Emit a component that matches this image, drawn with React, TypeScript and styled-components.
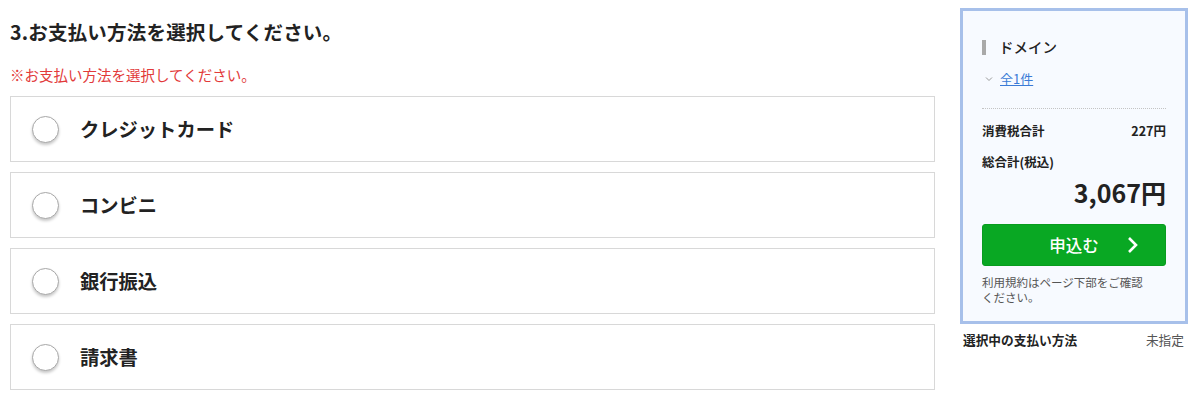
import React from "react";
import styled, { createGlobalStyle } from "styled-components";

const Global = createGlobalStyle`
  html, body { margin: 0; padding: 0; background: #fff; }
  body {
    font-family: "Noto Sans CJK JP", "Noto Sans", "Liberation Sans", sans-serif;
    color: #222;
  }
  * { box-sizing: border-box; }
`;

const Page = styled.div`
  display: flex;
  align-items: flex-start;
  width: 1200px;
  height: 407px;
  padding: 8px 12px 0 10px;
`;

const Main = styled.div`
  width: 925px;
  padding-top: 9px;
  display: flex;
  flex-direction: column;
`;

const Title = styled.h2`
  margin: 0;
  font-size: 19.5px;
  line-height: 30px;
  font-weight: 700;
  color: #222;
  letter-spacing: 0.2px;
`;

const Warning = styled.p`
  margin: 18px 0 0;
  font-size: 14.5px;
  line-height: 20px;
  color: #e23a3a;
`;

const Options = styled.div`
  margin-top: 11px;
  display: flex;
  flex-direction: column;
  gap: 10px;
`;

const Option = styled.label`
  display: flex;
  align-items: center;
  height: 66px;
  border: 1px solid #d8d8d8;
  padding-left: 21px;
  gap: 21px;
  background: #fff;
  cursor: pointer;
`;

const Radio = styled.span`
  width: 27px;
  height: 27px;
  border-radius: 50%;
  border: 1px solid #a8a8a8;
  background: #fff;
  box-shadow: 0 2px 3px rgba(0, 0, 0, 0.22);
  flex-shrink: 0;
`;

const OptionLabel = styled.span`
  font-size: 19.3px;
  font-weight: 700;
  color: #222;
  line-height: 28px;
`;

const Side = styled.aside`
  margin-left: 25px;
  width: 228px;
  display: flex;
  flex-direction: column;
`;

const Summary = styled.div`
  border: 3px solid #a7c0ea;
  background: #f7faff;
  padding: 26px 19px 16px;
  display: flex;
  flex-direction: column;
`;

const SectionHead = styled.div`
  display: flex;
  align-items: center;
  gap: 13px;
  font-size: 14.5px;
  line-height: 20px;
  font-weight: 500;
  color: #222;
  &::before {
    content: "";
    width: 4px;
    height: 15px;
    background: #a9a9a9;
  }
`;

const CountRow = styled.div`
  margin-top: 12px;
  display: flex;
  align-items: center;
  gap: 7px;
  padding-left: 3px;
  line-height: 20px;
`;

const CountLink = styled.a`
  font-size: 13px;
  color: #3a7ad6;
  text-decoration: underline;
  cursor: pointer;
`;

const Divider = styled.hr`
  margin: 19px 0 0;
  border: 0;
  border-top: 1px dotted #c4c4c4;
  height: 0;
`;

const Row = styled.div`
  margin-top: 13px;
  display: flex;
  justify-content: space-between;
  font-size: 12.5px;
  line-height: 18px;
  font-weight: 700;
  color: #222;
`;

const Total = styled.div`
  margin-top: 6px;
  text-align: right;
  font-size: 25px;
  line-height: 30px;
  font-weight: 700;
  color: #222;
`;

const Submit = styled.button`
  margin-top: 17px;
  height: 42px;
  width: 100%;
  border: 1px solid #089c1f;
  border-radius: 3px;
  background: #09a823;
  color: #fff;
  font-family: inherit;
  font-size: 16.5px;
  font-weight: 500;
  display: flex;
  align-items: center;
  justify-content: center;
  position: relative;
  cursor: pointer;
`;

const Arrow = styled.svg`
  position: absolute;
  right: 26px;
  top: 50%;
  transform: translateY(-50%);
`;

const Note = styled.p`
  margin: 9px 0 0;
  max-width: 168px;
  font-size: 11.5px;
  line-height: 15px;
  color: #555;
`;

const Selected = styled.div`
  margin-top: 7px;
  padding: 0 4px 0 3px;
  display: flex;
  justify-content: space-between;
  font-size: 12.7px;
  line-height: 18px;
`;

const SelectedLabel = styled.span`
  font-weight: 700;
  color: #222;
`;

const SelectedValue = styled.span`
  color: #555;
`;

const methods = ["クレジットカード", "コンビニ", "銀行振込", "請求書"];

export default function App() {
  return (
    <>
      <Global />
      <Page>
        <Main>
          <Title>3.お支払い方法を選択してください。</Title>
          <Warning>※お支払い方法を選択してください。</Warning>
          <Options>
            {methods.map((m) => (
              <Option key={m}>
                <Radio />
                <OptionLabel>{m}</OptionLabel>
              </Option>
            ))}
          </Options>
        </Main>
        <Side>
          <Summary>
            <SectionHead>ドメイン</SectionHead>
            <CountRow>
              <svg width="8" height="6" viewBox="0 0 8 6">
                <polyline points="1,1.5 4,4.5 7,1.5" fill="none" stroke="#999" strokeWidth="1" />
              </svg>
              <CountLink>全1件</CountLink>
            </CountRow>
            <Divider />
            <Row>
              <span>消費税合計</span>
              <span>227円</span>
            </Row>
            <Row>
              <span>総合計(税込)</span>
            </Row>
            <Total>3,067円</Total>
            <Submit>
              申込む
              <Arrow width="12" height="18" viewBox="0 0 12 18">
                <polyline points="2,2 9,9 2,16" fill="none" stroke="#fff" strokeWidth="2.6" />
              </Arrow>
            </Submit>
            <Note>利用規約はページ下部をご確認ください。</Note>
          </Summary>
          <Selected>
            <SelectedLabel>選択中の支払い方法</SelectedLabel>
            <SelectedValue>未指定</SelectedValue>
          </Selected>
        </Side>
      </Page>
    </>
  );
}
